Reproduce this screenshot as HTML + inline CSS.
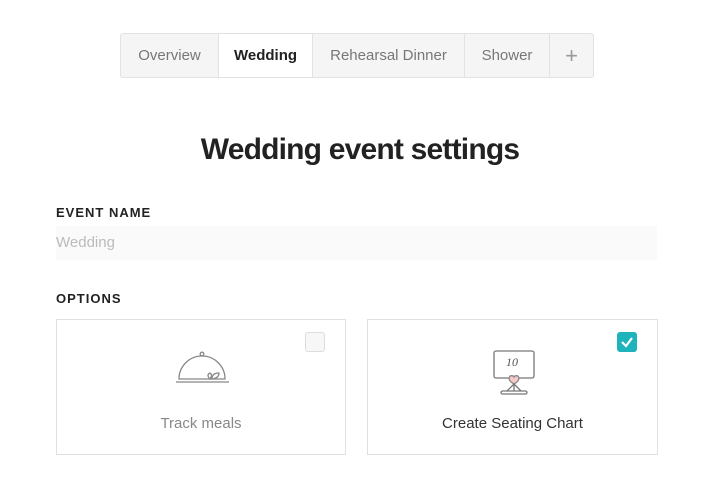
<!DOCTYPE html><html><head><style>
body{margin:0;width:720px;height:485px;background:#fff;font-family:"Liberation Sans",sans-serif;position:relative;overflow:hidden}
.tabs{position:absolute;left:120px;top:33px;height:43px;border:1px solid #e2e2e2;border-radius:3px;display:flex;background:#f5f5f5}
.tab{height:43px;line-height:44px;font-size:15px;color:#777;text-align:center;border-right:1px solid #e2e2e2;box-sizing:border-box}
.tab.a{background:#fff;color:#222;font-weight:bold}
h1{position:absolute;top:133px;left:0;width:720px;text-align:center;margin:0;font-size:30px;color:#222;font-weight:bold;letter-spacing:-0.8px}
.lbl{position:absolute;left:56px;font-size:13px;font-weight:bold;letter-spacing:1px;color:#222}
.inp{position:absolute;left:56px;top:226px;width:601px;height:34px;background:#fafafa;font-size:15px;color:#bbb;line-height:30px;padding-top:2px;box-sizing:border-box}
.card{position:absolute;top:319px;width:290px;height:136px;border:1px solid #e0e0e0;box-sizing:border-box}
.card .t{position:absolute;top:95px;width:100%;text-align:center;font-size:15px}
.cb{position:absolute;top:12px;right:20px;width:20px;height:20px;border-radius:3px;box-sizing:border-box}
</style></head><body>
<div class="tabs">
<div class="tab" style="width:98px">Overview</div>
<div class="tab a" style="width:94px">Wedding</div>
<div class="tab" style="width:152px">Rehearsal Dinner</div>
<div class="tab" style="width:85px">Shower</div>
<div class="tab" style="width:43px;border:none;font-size:22px;color:#999">+</div>
</div>
<h1>Wedding event settings</h1>
<div class="lbl" style="top:205px">EVENT NAME</div>
<div class="inp">Wedding</div>
<div class="lbl" style="top:291px">OPTIONS</div>
<div class="card" style="left:56px">
<div class="cb" style="border:1px solid #ddd;background:#f7f7f7"></div>
<svg style="position:absolute;left:117px;top:31px" width="56" height="34" viewBox="0 0 56 34" fill="none" stroke="#888" stroke-width="1.3">
<circle cx="28" cy="3" r="1.8"/><path d="M5 28 A23 23 0 0 1 51 28 Z"/><path d="M2 31 H55"/>
<path d="M36 28 q-4 -4 0 -6 q3 2 0 6z M38 28 q0 -6 7 -6 q0 5 -7 6z"/></svg>
<div class="t" style="color:#888">Track meals</div>
</div>
<div class="card" style="left:367px;width:291px">
<div class="cb" style="background:#1fb3bb"><svg width="20" height="20"><path d="M5 10 L9 14 L15 6" stroke="#fff" stroke-width="2.2" fill="none"/></svg></div>
<svg style="position:absolute;left:124px;top:29px" width="46" height="46" viewBox="0 0 46 46" fill="none" stroke="#777" stroke-width="1.3">
<rect x="2" y="2" width="40" height="27" rx="2"/><text x="14" y="17" font-size="12" font-style="italic" fill="#555" stroke="none" font-family="Liberation Serif">10</text>
<path d="M22 35 q-7 -4 -4 -8 q3 -1 4 1 q1 -2 4 -1 q3 4 -4 8z" fill="#f7c8c8" stroke="#888"/>
<path d="M22 35 L15 42 M22 35 L29 42 M22 35 V42"/><rect x="9" y="42" width="26" height="3" rx="1.5"/></svg>
<div class="t" style="color:#333">Create Seating Chart</div>
</div>
</body></html>
